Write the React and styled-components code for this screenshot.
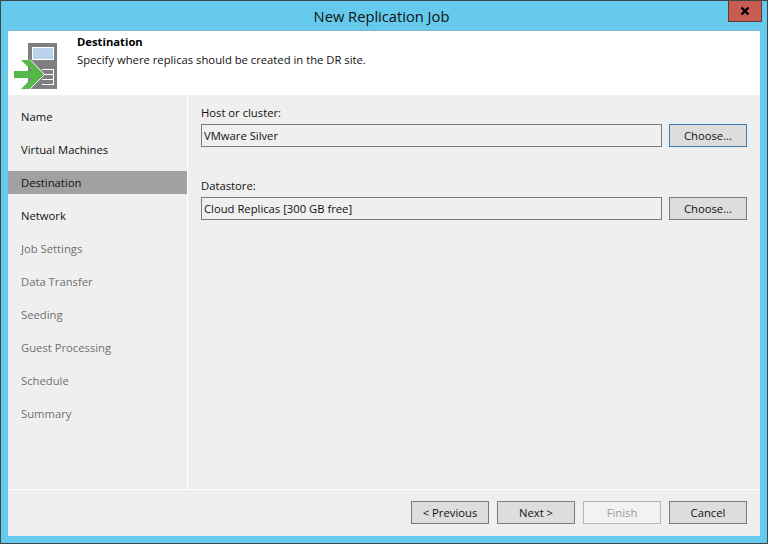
import React from 'react';
import styled, { createGlobalStyle } from 'styled-components';

const Global = createGlobalStyle`
  html, body { margin: 0; padding: 0; background: #65caec; }
  #root { width: 768px; height: 544px; }
  * { box-sizing: border-box; }
`;

const Window = styled.div`
  position: relative;
  width: 768px;
  height: 544px;
  display: flex;
  flex-direction: column;
  background: #65caec;
  border: 1px solid #3c4a50;
  font-family: "Open Sans", "Noto Sans", sans-serif;
  font-size: 11.25px;
  color: #1a1a1a;
`;

const TitleBar = styled.div`
  height: 29px;
  flex: none;
  display: flex;
  align-items: center;
  justify-content: center;
  padding-right: 5px;
  font-size: 14.7px;
  color: #111;
`;

const Close = styled.div`
  position: absolute;
  top: 0;
  right: 5px;
  width: 34px;
  height: 21px;
  background: #c75c52;
  border: 1px solid #5f3b38;
  border-top: none;
  display: flex;
  align-items: center;
  justify-content: center;
`;

const Body = styled.div`
  flex: 1;
  margin: 0 7px 7px;
  display: flex;
  flex-direction: column;
  background: #efefef;
  border-top: 1px solid #7fb4cc;
`;

const Header = styled.div`
  height: 64px;
  flex: none;
  background: #fff;
  display: flex;
  padding: 4px 0 0 6px;
`;

const IconBox = styled.div`
  width: 63px;
  flex: none;
  padding-top: 8px;
`;

const HeaderText = styled.div`
  display: flex;
  flex-direction: column;
  gap: 3px;
`;

const HeaderTitle = styled.div`
  font-weight: 700;
  line-height: 14px;
  color: #000;
`;

const HeaderSub = styled.div`
  line-height: 16px;
  color: #111;
`;

const Main = styled.div`
  flex: 1;
  display: flex;
  min-height: 0;
`;

const Nav = styled.div`
  width: 179px;
  flex: none;
  padding-top: 10px;
  display: flex;
  flex-direction: column;
  gap: 10px;
`;

const NavItem = styled.div`
  height: 23px;
  padding-left: 13px;
  display: flex;
  align-items: center;
  background: ${p => (p.$active ? '#a1a1a1' : 'transparent')};
  color: ${p => (p.$muted ? '#6f6f6f' : '#111')};
`;

const Content = styled.div`
  flex: 1;
  border-left: 1px solid #fff;
  padding: 10px 13px 0 13px;
  display: flex;
  flex-direction: column;
  gap: 31px;
`;

const Field = styled.div`
  display: flex;
  flex-direction: column;
  gap: 3px;
`;

const Label = styled.div`
  line-height: 16px;
  color: #111;
`;

const FieldRow = styled.div`
  display: flex;
  gap: 7px;
`;

const Input = styled.div`
  flex: 1;
  height: 23px;
  border: 1px solid #7a7a7a;
  background: #efefef;
  padding-left: 2px;
  display: flex;
  align-items: center;
  color: #111;
`;

const Button = styled.div`
  width: 78px;
  height: 23px;
  flex: none;
  display: flex;
  align-items: center;
  justify-content: center;
  border: 1px solid ${p => (p.$disabled ? '#b5b5b5' : p.$focus ? '#3d7fb5' : '#7a7a7a')};
  background: ${p => (p.$disabled ? '#f2f2f2' : '#dddddd')};
  color: ${p => (p.$disabled ? '#9a9a9a' : '#111')};
`;

const Footer = styled.div`
  height: 47px;
  flex: none;
  border-top: 1px solid #fff;
  display: flex;
  justify-content: flex-end;
  align-items: flex-start;
  gap: 8px;
  padding: 11px 13px 0 0;
`;

const steps = [
  ['Name'], ['Virtual Machines'], ['Destination', 'active'], ['Network'],
  ['Job Settings', 'muted'], ['Data Transfer', 'muted'], ['Seeding', 'muted'],
  ['Guest Processing', 'muted'], ['Schedule', 'muted'], ['Summary', 'muted'],
];

const HeaderIcon = () => (
  <svg width="44" height="46" viewBox="0 0 44 46" style={{ display: 'block' }}>
    <rect x="14" y="0" width="29" height="46" fill="#7f7f7f" />
    <rect x="18.5" y="4.5" width="21" height="12" fill="#b9d3ec" stroke="#fff" strokeWidth="1" />
    <path d="M28 26.5H39.5M28 31.5H39.5M28 36.5H39.5M28 41.5H39.5M39.5 26V42" stroke="#fff" strokeWidth="1" fill="none" shapeRendering="crispEdges" />
    <path d="M7 17H16L30 31.5L16 46H7L18 35H0V28H18Z" fill="#54b948" />
    <path d="M16 16.5L30.5 31.5L16 46" stroke="#fff" strokeWidth="1" fill="none" />
  </svg>
);

export default function App() {
  return (
    <Window>
      <Global />
      <TitleBar>New Replication Job</TitleBar>
      <Close>
        <svg width="12" height="10" viewBox="0 0 12 10">
          <path d="M2.5 1.5L9.5 8.5M9.5 1.5L2.5 8.5" stroke="#000" strokeWidth="2.4" />
        </svg>
      </Close>
      <Body>
        <Header>
          <IconBox><HeaderIcon /></IconBox>
          <HeaderText>
            <HeaderTitle>Destination</HeaderTitle>
            <HeaderSub>Specify where replicas should be created in the DR site.</HeaderSub>
          </HeaderText>
        </Header>
        <Main>
          <Nav>
            {steps.map(([t, s]) => (
              <NavItem key={t} $active={s === 'active'} $muted={s === 'muted'}>{t}</NavItem>
            ))}
          </Nav>
          <Content>
            <Field>
              <Label>Host or cluster:</Label>
              <FieldRow>
                <Input>VMware Silver</Input>
                <Button $focus>Choose...</Button>
              </FieldRow>
            </Field>
            <Field>
              <Label>Datastore:</Label>
              <FieldRow>
                <Input>Cloud Replicas [300 GB free]</Input>
                <Button>Choose...</Button>
              </FieldRow>
            </Field>
          </Content>
        </Main>
        <Footer>
          <Button>&lt; Previous</Button>
          <Button>Next &gt;</Button>
          <Button $disabled>Finish</Button>
          <Button>Cancel</Button>
        </Footer>
      </Body>
    </Window>
  );
}
